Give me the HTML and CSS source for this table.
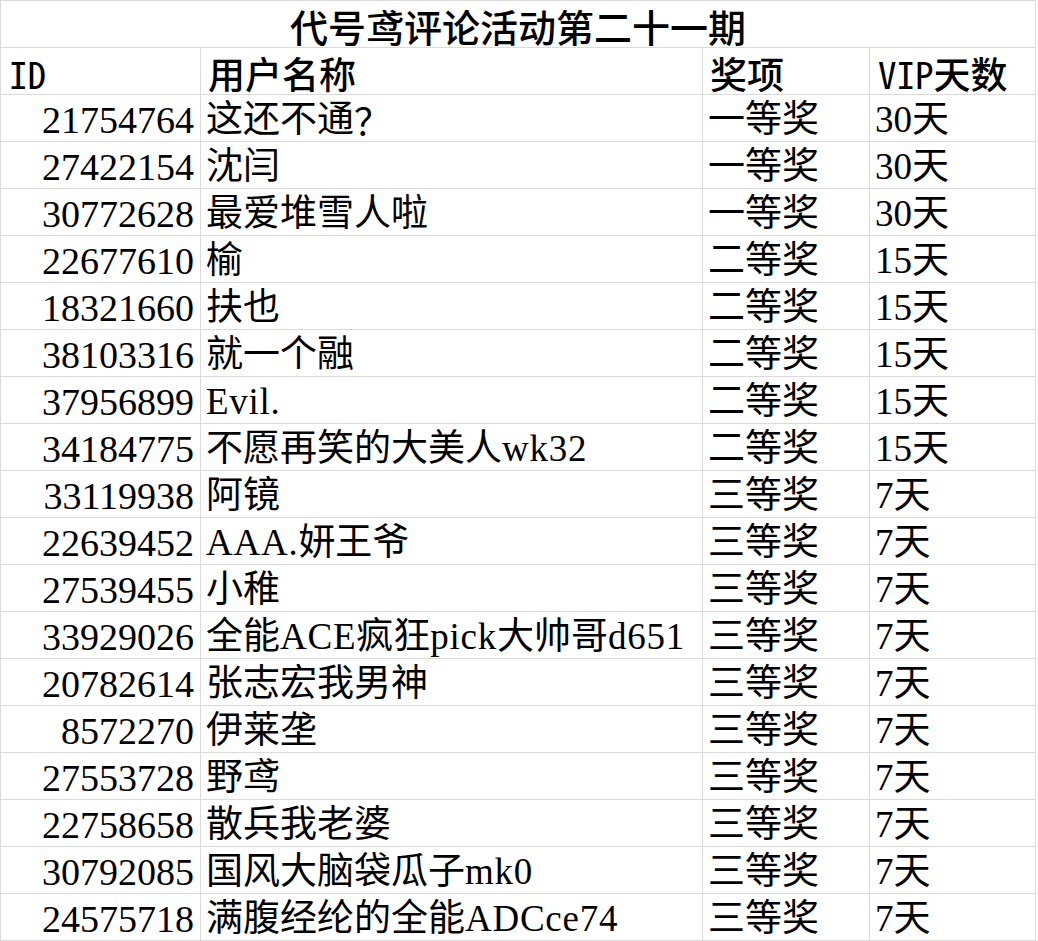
FILE: index.html
```html
<!DOCTYPE html>
<html lang="zh-CN">
<head>
<meta charset="utf-8">
<title>代号鸢评论活动第二十一期</title>
<link rel="stylesheet" href="styles.css">
</head>
<body>
<div class="sheet">
  <div class="cell title">代号鸢评论活动第二十一期</div>

  <div class="cell head"><span class="hlat">ID</span></div>
  <div class="cell head">用户名称</div>
  <div class="cell head">奖项</div>
  <div class="cell head"><span class="hlat">VIP</span>天数</div>

  <div class="cell num">21754764</div><div class="cell txt">这还不通<span class="cjk">？</span></div><div class="cell txt">一等奖</div><div class="cell txt">30天</div>
  <div class="cell num">27422154</div><div class="cell txt">沈闫</div><div class="cell txt">一等奖</div><div class="cell txt">30天</div>
  <div class="cell num">30772628</div><div class="cell txt">最爱堆雪人啦</div><div class="cell txt">一等奖</div><div class="cell txt">30天</div>
  <div class="cell num">22677610</div><div class="cell txt">榆</div><div class="cell txt">二等奖</div><div class="cell txt">15天</div>
  <div class="cell num">18321660</div><div class="cell txt">扶也</div><div class="cell txt">二等奖</div><div class="cell txt">15天</div>
  <div class="cell num">38103316</div><div class="cell txt">就一个融</div><div class="cell txt">二等奖</div><div class="cell txt">15天</div>
  <div class="cell num">37956899</div><div class="cell txt"><span class="lat">Evil.</span></div><div class="cell txt">二等奖</div><div class="cell txt">15天</div>
  <div class="cell num">34184775</div><div class="cell txt">不愿再笑的大美人<span class="lat">wk32</span></div><div class="cell txt">二等奖</div><div class="cell txt">15天</div>
  <div class="cell num">33119938</div><div class="cell txt">阿镜</div><div class="cell txt">三等奖</div><div class="cell txt">7天</div>
  <div class="cell num">22639452</div><div class="cell txt"><span class="lat">AAA.</span>妍王爷</div><div class="cell txt">三等奖</div><div class="cell txt">7天</div>
  <div class="cell num">27539455</div><div class="cell txt">小稚</div><div class="cell txt">三等奖</div><div class="cell txt">7天</div>
  <div class="cell num">33929026</div><div class="cell txt">全能<span class="lat">ACE</span>疯狂<span class="lat">pick</span>大帅哥<span class="lat">d651</span></div><div class="cell txt">三等奖</div><div class="cell txt">7天</div>
  <div class="cell num">20782614</div><div class="cell txt">张志宏我男神</div><div class="cell txt">三等奖</div><div class="cell txt">7天</div>
  <div class="cell num">8572270</div><div class="cell txt">伊莱垄</div><div class="cell txt">三等奖</div><div class="cell txt">7天</div>
  <div class="cell num">27553728</div><div class="cell txt">野鸢</div><div class="cell txt">三等奖</div><div class="cell txt">7天</div>
  <div class="cell num">22758658</div><div class="cell txt">散兵我老婆</div><div class="cell txt">三等奖</div><div class="cell txt">7天</div>
  <div class="cell num">30792085</div><div class="cell txt">国风大脑袋瓜子<span class="lat">mk0</span></div><div class="cell txt">三等奖</div><div class="cell txt">7天</div>
  <div class="cell num">24575718</div><div class="cell txt">满腹经纶的全能<span class="lat">ADCce74</span></div><div class="cell txt">三等奖</div><div class="cell txt">7天</div>
</div>
</body>
</html>
```

FILE: styles.css
```css
html, body {
  margin: 0;
  padding: 0;
  background: #ffffff;
}

.sheet {
  display: inline-grid;
  grid-template-columns: 199px 501px 166px 165px;
  grid-auto-rows: 46px;
  gap: 1px;
  padding: 1px;
  background: #dadada;
  color: #000000;
}

.cell {
  background: #ffffff;
  display: flex;
  align-items: center;
  white-space: nowrap;
  box-sizing: border-box;
  line-height: 1.1;
}

.title {
  grid-column: 1 / -1;
  justify-content: center;
  font-family: "Noto Sans CJK SC", sans-serif;
  font-size: 38px;
  font-weight: 500;
  padding-top: 3px;
}

.head {
  font-family: "Noto Sans CJK SC", sans-serif;
  font-size: 37px;
  font-weight: 500;
  padding-left: 7px;
  padding-top: 4px;
}

.hlat {
  font-family: "Noto Sans Mono CJK SC", "Noto Sans CJK SC", sans-serif;
  font-weight: 500;
  padding-left: 1px;
}

.num {
  justify-content: flex-end;
  padding-right: 6px;
  font-family: "Liberation Serif", serif;
  font-size: 38px;
  padding-top: 5px;
}

.txt {
  padding-left: 5px;
  font-family: "Liberation Serif", "Noto Sans CJK SC", serif;
  font-size: 37px;
  font-weight: 400;
  padding-top: 5px;
}

.cjk {
  font-family: "Noto Sans CJK SC", sans-serif;
}

.lat {
  font-family: "Liberation Serif", serif;
  letter-spacing: 0.02em;
}
```
